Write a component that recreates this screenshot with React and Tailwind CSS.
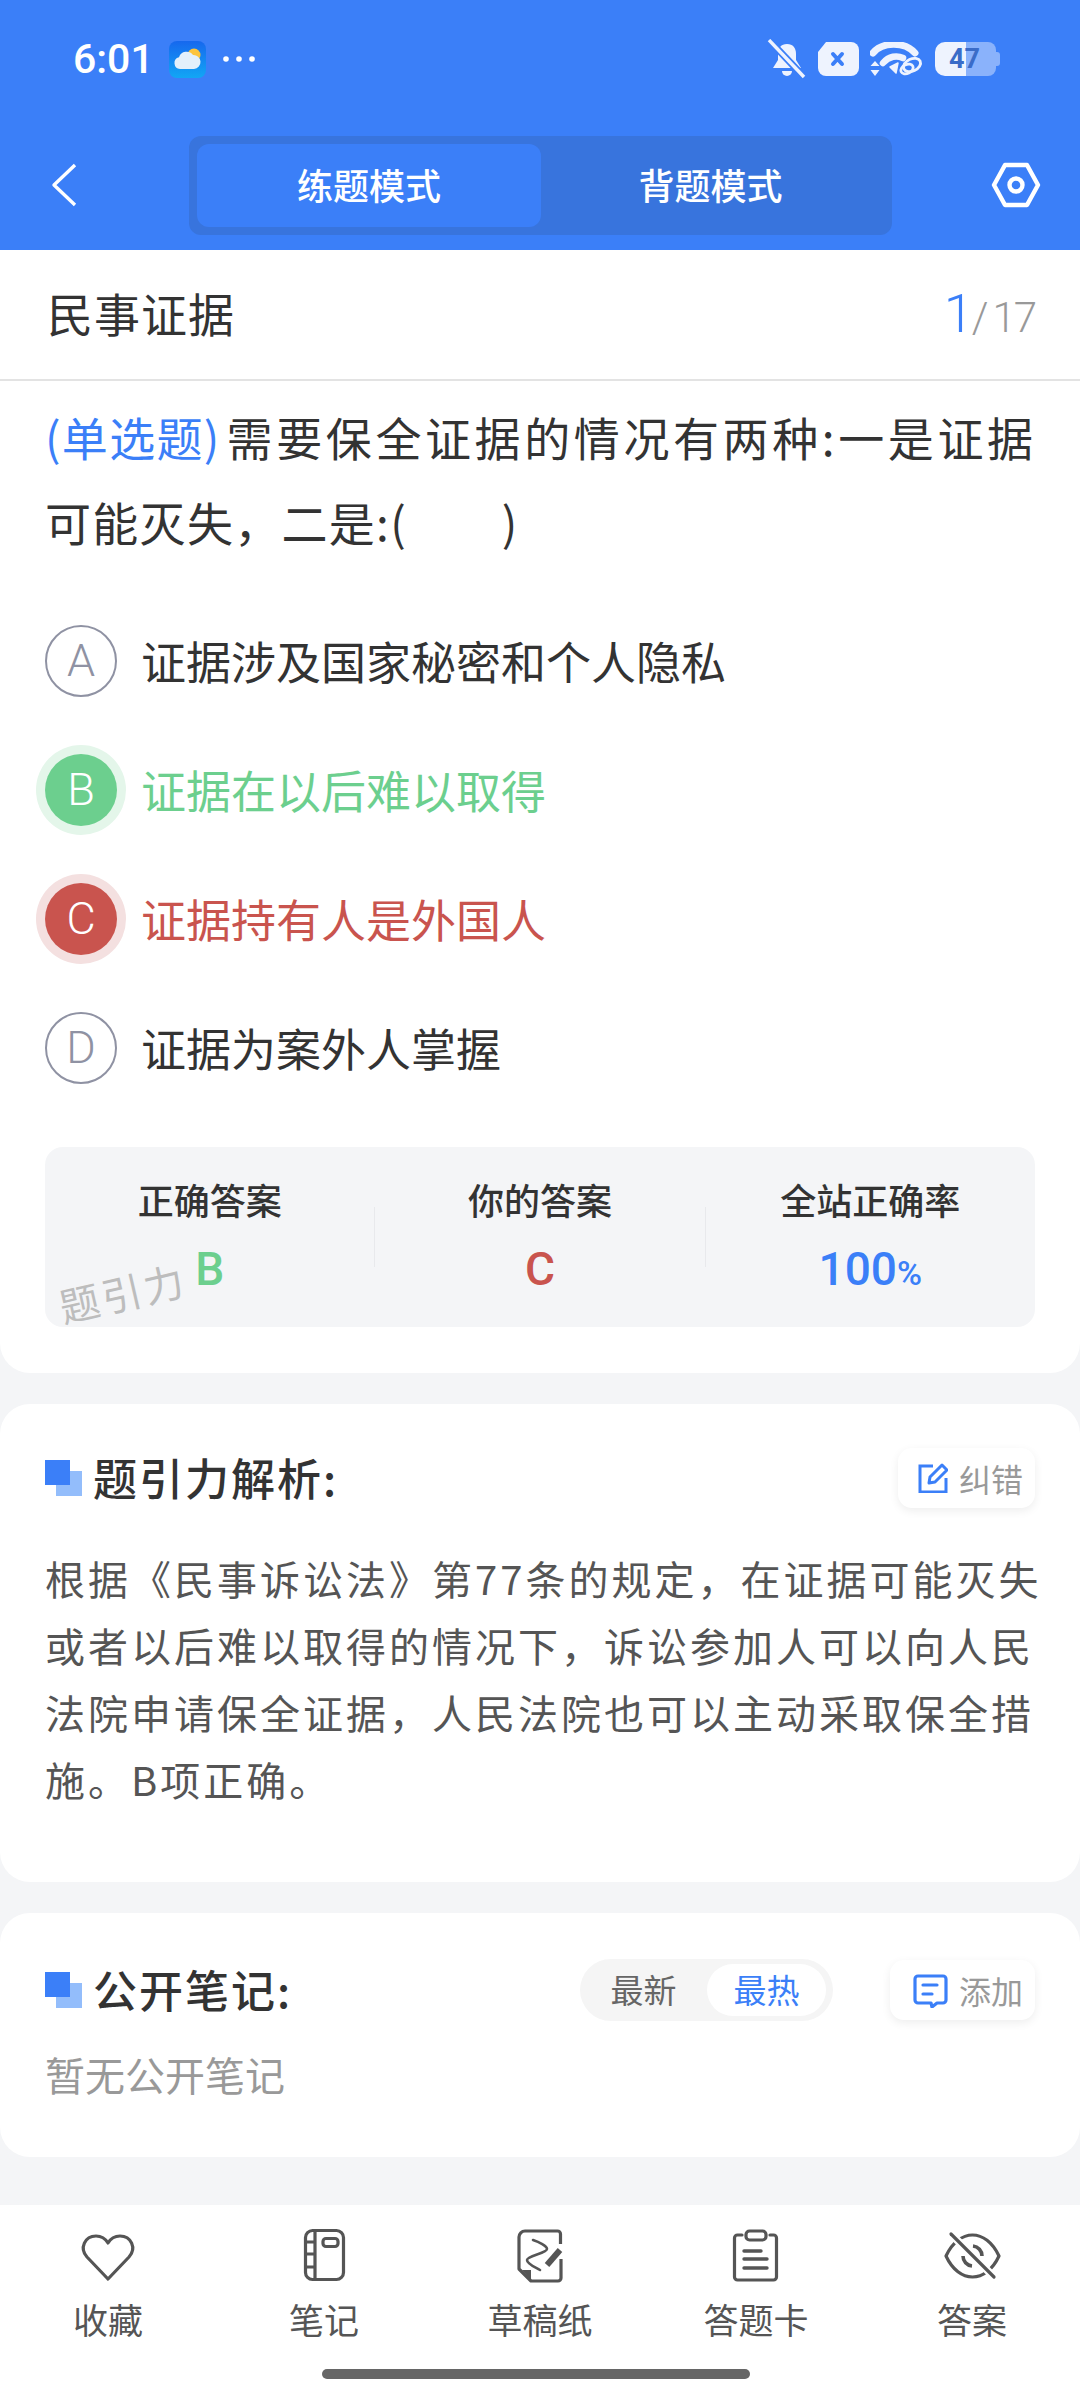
const cjk = { fontFamily: '"Noto Sans CJK SC", Roboto, sans-serif' }

function StatusBar() {
  return (
    <div className="h-[118px] flex items-center pl-[73px] pr-[80px] text-white">
      <span className="text-[41px] font-medium font-['Roboto'] leading-none">6:01</span>
      <svg width="37" height="37" viewBox="0 0 37 37" className="ml-[15px]">
        <defs>
          <linearGradient id="sky" x1="0" y1="0" x2="0" y2="1">
            <stop offset="0" stopColor="#1668ee" />
            <stop offset="1" stopColor="#12a6f5" />
          </linearGradient>
        </defs>
        <rect width="37" height="37" rx="8" fill="url(#sky)" />
        <circle cx="25" cy="14" r="6.5" fill="#fcc43d" />
        <path d="M11 28a6 6 0 0 1-1-11.8A8 8 0 0 1 24 14a7 7 0 0 1 1 14z" fill="#e3f0fb" />
      </svg>
      <svg width="34" height="8" viewBox="0 0 34 8" className="ml-[16px]" fill="#fff">
        <circle cx="4" cy="4" r="2.8" />
        <circle cx="17" cy="4" r="2.8" />
        <circle cx="30" cy="4" r="2.8" />
      </svg>
      <div className="ml-auto flex items-center">
        <svg width="40" height="40" viewBox="0 0 40 40" fill="#eef3fe">
          <path d="M20 5c6 0 9 4 9 10v6l5 8H6l5-8v-6c0-6 3-10 9-10z" />
          <path d="M15 32h10a5 5 0 0 1-10 0z" />
          <path d="M2 1l35 37" stroke="#3b7ff8" strokeWidth="7" />
          <path d="M2 1l35 37" stroke="#eef3fe" strokeWidth="3.4" />
        </svg>
        <svg width="43" height="34" viewBox="0 0 43 34" className="ml-[9px]">
          <path d="M10 0h25a8 8 0 0 1 8 8v18a8 8 0 0 1-8 8H10a8 8 0 0 1-8-8V10z" fill="#eef3fe" />
          <path d="M17 12l9 10M26 12l-9 10" stroke="#3b7ff8" strokeWidth="4" strokeLinecap="round" />
        </svg>
        <svg width="53" height="34" viewBox="0 0 53 34" className="ml-[11px]" fill="none" stroke="#eef3fe">
          <path d="M3 11C12 0 34 -1 45 11" strokeWidth="7" strokeLinecap="round" />
          <path d="M13 21c6-7 14-8 20-5" strokeWidth="6.5" strokeLinecap="round" />
          <path d="M20 25l8-4-2 10z" fill="#eef3fe" strokeWidth="1.5" strokeLinejoin="round" />
          <path d="M5 19l4.5 5h-9zM5 34l4.5-6h-9z" fill="#eef3fe" stroke="none" />
          <ellipse cx="42" cy="23" rx="9" ry="6" strokeWidth="2.8" transform="rotate(-25 42 23)" />
          <ellipse cx="37" cy="27" rx="6.5" ry="4.4" strokeWidth="2.8" transform="rotate(-25 37 27)" />
        </svg>
        <div className="ml-[12px] relative w-[65px] h-[34px]">
          <div className="absolute inset-0 flex">
            <div className="w-[31px] bg-[#eef3fe] rounded-l-[10px]" />
            <div className="w-[30px] bg-[#8ab2fb] rounded-r-[8px]" />
            <div className="w-[4px] h-[14px] self-center bg-[#8ab2fb] rounded-r-[3px]" />
          </div>
          <span className="absolute left-[14px] top-0 leading-[34px] text-[27px] font-bold font-['Roboto'] text-[#3a6cc8]">47</span>
        </div>
      </div>
    </div>
  )
}

function NavBar() {
  return (
    <div className="h-[132px] flex items-start pt-[18px] pl-[51px] pr-[39px]">
      <svg width="26" height="44" viewBox="0 0 26 44" fill="none" stroke="#fff" strokeWidth="3.4" className="mt-[27px]">
        <path d="M24 2L3 22l21 20" strokeLinejoin="round" />
      </svg>
      <div className="ml-[112px] w-[703px] h-[99px] bg-[#3874dd] rounded-[12px] p-[8px] flex text-white text-[36px] font-medium leading-none">
        <div className="w-[344px] bg-[#3b7ff8] rounded-[12px] flex items-center justify-center pb-[4px]">练题模式</div>
        <div className="flex-1 flex items-center justify-center pb-[4px] pr-[4px]">背题模式</div>
      </div>
      <svg width="50" height="46" viewBox="0 0 50 46" fill="none" stroke="#fff" strokeWidth="4.4" className="ml-auto mt-[26px]">
        <path d="M14 3h22l11 20-11 20H14L3 23z" strokeLinejoin="round" />
        <circle cx="25" cy="23" r="6.5" />
      </svg>
    </div>
  )
}

function Option({ letter, text, state }) {
  const circle = {
    correct: 'bg-[#6ccf8e] text-white ring-[9px] ring-[#e4f6ea]',
    wrong: 'bg-[#c9544e] text-white ring-[9px] ring-[#f4e0e0]',
    none: 'border-2 border-[#8f92a3] text-[#8f92a3]',
  }[state]
  const color = { correct: 'text-[#6ccf8e]', wrong: 'text-[#c9544e]', none: 'text-[#333333]' }[state]
  return (
    <div className="h-[129px] flex items-center">
      <div className={`w-[72px] h-[72px] rounded-full flex items-center justify-center text-[45px] font-light font-['Roboto'] ${circle}`}>{letter}</div>
      <span className={`ml-[24px] text-[45px] ${color}`}>{text}</span>
    </div>
  )
}

function Stat({ label, children }) {
  return (
    <div className="flex-1 flex flex-col items-center">
      <span className="text-[36px] font-medium text-[#333333] leading-[46px]">{label}</span>
      <div className="mt-[23px] h-[48px] flex items-center text-[46px] font-medium font-['Roboto'] leading-none">{children}</div>
    </div>
  )
}

function Heading({ text }) {
  return (
    <div className="flex items-center">
      <div className="relative w-[37px] h-[36px]">
        <div className="absolute left-[11px] top-[11px] w-[26px] h-[25px] bg-[#93bdfb]" />
        <div className="absolute left-0 top-0 w-[25px] h-[25px] bg-[#3b7ff8]" />
      </div>
      <span className="ml-[11px] pb-[3px] text-[44px] font-medium text-[#333333] tracking-[2px] leading-none">{text}</span>
    </div>
  )
}

function ActionButton({ label, icon }) {
  return (
    <div className="h-[60px] bg-white rounded-[14px] shadow-[0_3px_10px_rgba(0,0,0,0.07)] flex items-center pl-[20px] pr-[12px]">
      {icon}
      <span className="ml-[11px] text-[32px] text-[#999999] leading-none">{label}</span>
    </div>
  )
}

const navItems = [
  {
    label: '收藏',
    icon: <path d="M27 50L6 28C-2 19 4 7 15 7c5 0 9 2 12 7 3-5 7-7 12-7 11 0 17 12 9 21z" strokeLinejoin="round" />,
  },
  {
    label: '笔记',
    icon: (
      <>
        <rect x="8.5" y="1.5" width="38" height="49" rx="7" />
        <path d="M18 2v48M8 13h10M8 25h10M8 38h10" />
        <rect x="26" y="9.5" width="15" height="8" rx="3" />
      </>
    ),
  },
  {
    label: '草稿纸',
    icon: (
      <>
        <path d="M47.5 15V5a3 3 0 0 0-3-3H12a6 6 0 0 0-6 6v32l12 12h27a3 3 0 0 0 3-3V30" strokeLinejoin="round" />
        <path d="M9 41h9v10z" fill="#555555" stroke="none" />
        <path d="M20 11c6 2 14 6 14 9 0 4-20 7-20 11 0 4 8 7 13 10" strokeWidth="2.6" strokeLinecap="round" />
        <path d="M34 36l13-15" strokeWidth="6" />
      </>
    ),
  },
  {
    label: '答题卡',
    icon: (
      <>
        <path d="M13 6H8.5a3 3 0 0 0-3 3v39a3 3 0 0 0 3 3h36a3 3 0 0 0 3-3V9a3 3 0 0 0-3-3H41" strokeLinecap="round" />
        <rect x="17" y="2" width="20" height="9" rx="3.5" />
        <path d="M15 22h17M15 30h23M15 39h23" strokeLinecap="round" strokeWidth="3.4" />
      </>
    ),
  },
  {
    label: '答案',
    icon: (
      <>
        <path d="M1 27C14 -1 41 -1 54 27 41 55 14 55 1 27z" strokeLinejoin="round" />
        <path d="M28 17a10 10 0 0 1 9 10M18 27a10 10 0 0 0 9 10" strokeWidth="3.6" />
        <path d="M6 5l43 43" stroke="#ffffff" strokeWidth="8" />
        <path d="M6 5l43 43" strokeLinecap="round" />
      </>
    ),
  },
]

export default function App() {
  return (
    <div className="w-[1080px] h-[2400px] overflow-hidden flex flex-col bg-[#f4f5f7] text-[#333333]" style={cjk}>
      <header className="bg-[#3b7ff8]">
        <StatusBar />
        <NavBar />
      </header>

      <section className="bg-white rounded-b-[30px] h-[1123px]">
        <div className="h-[131px] border-b-2 border-[#e3e3e3] pl-[47px] pr-[45px] pb-[6px] flex items-center justify-between">
          <span className="text-[46px] text-[#333333] tracking-[1px] leading-none">民事证据</span>
          <span className="pt-[5px] text-[42px] text-[#999999] font-['Roboto'] font-light leading-none tracking-[-2px] flex items-baseline">
            <span className="text-[54px] text-[#3b7ff8]">1</span>/<span className="ml-[6px]">17</span>
          </span>
        </div>
        <p className="pl-[45px] pr-[40px] pt-[13px] text-[46px] leading-[85px] tracking-[3.6px] text-[#333333]">
          <span className="text-[#3b7ff8] tracking-[1.3px] mr-[6px]">(单选题)</span>需要保全证据的情况有两种:一是证据
          <span className="tracking-[1.3px]">可能灭失，二是:(　　)</span>
        </p>
        <div className="mt-[32px] px-[45px]">
          <Option letter="A" text="证据涉及国家秘密和个人隐私" state="none" />
          <Option letter="B" text="证据在以后难以取得" state="correct" />
          <Option letter="C" text="证据持有人是外国人" state="wrong" />
          <Option letter="D" text="证据为案外人掌握" state="none" />
        </div>
        <div className="relative mx-[45px] mt-[35px] h-[180px] bg-[#f4f5f7] rounded-[18px] pt-[29px] flex">
          <Stat label="正确答案"><span className="text-[#6ccf8e]">B</span></Stat>
          <div className="w-px h-[60px] mt-[31px] bg-[#e8e9ec]" />
          <Stat label="你的答案"><span className="text-[#c9544e]">C</span></Stat>
          <div className="w-px h-[60px] mt-[31px] bg-[#e8e9ec]" />
          <Stat label="全站正确率">
            <span className="text-[#3b7ff8]">100<span className="text-[34px]">%</span></span>
          </Stat>
          <span className="absolute left-[13px] top-[125px] text-[40px] text-[#bdbdbd] leading-none -rotate-[13deg] tracking-[3px]">题引力</span>
        </div>
      </section>

      <section className="mt-[31px] bg-white rounded-[30px] h-[478px] px-[45px] pt-[44px]">
        <div className="flex items-center justify-between">
          <Heading text="题引力解析:" />
          <ActionButton
            label="纠错"
            icon={
              <svg width="30" height="30" viewBox="0 0 30 30" fill="none" stroke="#3b7ff8" strokeWidth="3">
                <path d="M15 3H2v26h26V15" />
                <path d="M11 20l1-6L24 2l5 5-12 12z" strokeLinejoin="round" />
              </svg>
            }
          />
        </div>
        <p className="mt-[37px] -mr-[10px] text-[40px] leading-[67px] tracking-[3px] text-[#555555]">
          根据《民事诉讼法》第77条的规定，在证据可能灭失或者以后难以取得的情况下，诉讼参加人可以向人民法院申请保全证据，人民法院也可以主动采取保全措施。B项正确。
        </p>
      </section>

      <section className="mt-[31px] bg-white rounded-[30px] h-[244px] px-[45px] pt-[46px]">
        <div className="flex items-center">
          <Heading text="公开笔记:" />
          <div className="ml-auto w-[253px] h-[62px] rounded-full bg-[#f5f5f5] flex items-center text-[33px] pr-[7px]">
            <span className="flex-1 text-center text-[#666666]">最新</span>
            <span className="w-[119px] h-[52px] rounded-full bg-white text-[#3b7ff8] flex items-center justify-center">最热</span>
          </div>
          <div className="ml-[57px]">
            <ActionButton
              label="添加"
              icon={
                <svg width="35" height="35" viewBox="0 0 35 35" fill="none" stroke="#3b7ff8" strokeWidth="3.2" className="ml-[3px]">
                  <path d="M5 3h25a3 3 0 0 1 3 3v21a3 3 0 0 1-3 3h-6l-5 4-1-4H5a3 3 0 0 1-3-3V6a3 3 0 0 1 3-3z" strokeLinejoin="round" />
                  <path d="M10 12h14M10 21h9" strokeLinecap="round" />
                </svg>
              }
            />
          </div>
        </div>
        <p className="mt-[25px] text-[40px] leading-[56px] text-[#999999]">暂无公开笔记</p>
      </section>

      <nav className="mt-[48px] flex-1 bg-white flex flex-col">
        <div className="grid grid-cols-5 pt-[24px]">
          {navItems.map((item) => (
            <div key={item.label} className="flex flex-col items-center">
              <svg width="54" height="54" viewBox="0 0 54 54" fill="none" stroke="#555555" strokeWidth="3.2" className="overflow-visible">
                {item.icon}
              </svg>
              <span className="mt-[13px] text-[35px] text-[#555555] leading-[46px]">{item.label}</span>
            </div>
          ))}
        </div>
        <div className="mt-[27px] ml-[322px] w-[428px] h-[10px] rounded-full bg-[#666666]" />
      </nav>
    </div>
  )
}
